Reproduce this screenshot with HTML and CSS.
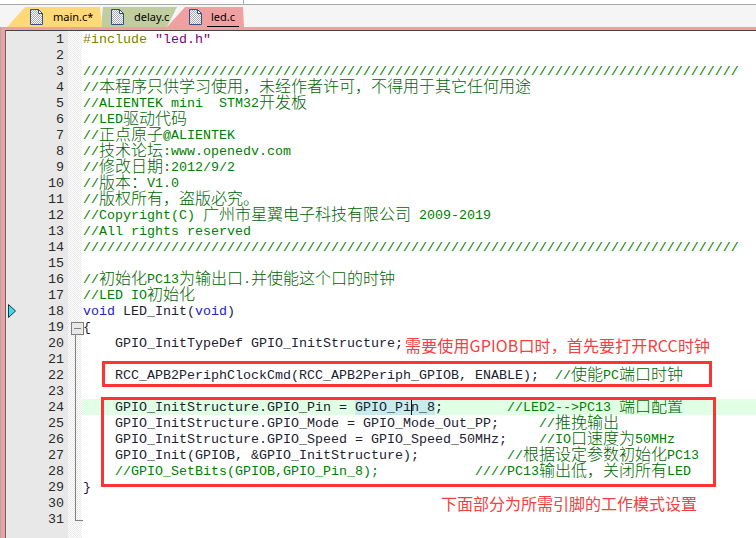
FILE: index.html
```html
<!DOCTYPE html>
<html lang="zh">
<head>
<meta charset="utf-8">
<title>led.c</title>
<link rel="stylesheet" href="styles.css">
</head>
<body>
<div class="app">
  <svg width="0" height="0" class="defs"><defs>
    <pattern id="dots" width="2" height="2" patternUnits="userSpaceOnUse"><rect width="2" height="2" fill="#fff"/><rect width="1" height="1" fill="#aab"/><rect x="1" y="1" width="1" height="1" fill="#aab"/></pattern>
    <symbol id="page" viewBox="0 0 13 16"><path d="M.5.5H8.5L12.5 4.5V15.5H.5Z" fill="url(#dots)" stroke="#33508c"/><path d="M8.5.5V4.5H12.5Z" fill="#fff" stroke="#33508c"/></symbol>
  </defs></svg>
  <div class="topbar"></div>
  <div class="tabs">
    <div class="tab tab-main"><svg class="page"><use href="#page"/></svg><span class="tab-label">main.c*</span></div>
    <div class="tab tab-delay"><svg class="page"><use href="#page"/></svg><span class="tab-label">delay.c</span></div>
    <div class="tab tab-led"><svg class="page"><use href="#page"/></svg><span class="tab-label active">led.c</span></div>
  </div>
  <div class="frame">
    <div class="editor">
      <div class="row"><span class="num">1</span><span class="fold"></span><code class="code"><span class="p">#include</span> <span class="s">"led.h"</span></code></div>
      <div class="row"><span class="num">2</span><span class="fold"></span><code class="code"></code></div>
      <div class="row"><span class="num">3</span><span class="fold"></span><code class="code c">//////////////////////////////////////////////////////////////////////////////////</code></div>
      <div class="row"><span class="num">4</span><span class="fold"></span><code class="code c">//<span class="z">本程序只供学习使用，未经作者许可，不得用于其它任何用途</span></code></div>
      <div class="row"><span class="num">5</span><span class="fold"></span><code class="code c">//ALIENTEK mini  STM32<span class="z">开发板</span></code></div>
      <div class="row"><span class="num">6</span><span class="fold"></span><code class="code c">//LED<span class="z">驱动代码</span></code></div>
      <div class="row"><span class="num">7</span><span class="fold"></span><code class="code c">//<span class="z">正点原子</span>@ALIENTEK</code></div>
      <div class="row"><span class="num">8</span><span class="fold"></span><code class="code c">//<span class="z">技术论坛</span>:www.openedv.com</code></div>
      <div class="row"><span class="num">9</span><span class="fold"></span><code class="code c">//<span class="z">修改日期</span>:2012/9/2</code></div>
      <div class="row"><span class="num">10</span><span class="fold"></span><code class="code c">//<span class="z">版本：</span>V1.0</code></div>
      <div class="row"><span class="num">11</span><span class="fold"></span><code class="code c">//<span class="z">版权所有，盗版必究。</span></code></div>
      <div class="row"><span class="num">12</span><span class="fold"></span><code class="code c">//Copyright(C) <span class="z">广州市星翼电子科技有限公司</span> 2009-2019</code></div>
      <div class="row"><span class="num">13</span><span class="fold"></span><code class="code c">//All rights reserved</code></div>
      <div class="row"><span class="num">14</span><span class="fold"></span><code class="code c">//////////////////////////////////////////////////////////////////////////////////</code></div>
      <div class="row"><span class="num">15</span><span class="fold"></span><code class="code"></code></div>
      <div class="row"><span class="num">16</span><span class="fold"></span><code class="code c">//<span class="z">初始化</span>PC13<span class="z">为输出口</span>.<span class="z">并使能这个口的时钟</span></code></div>
      <div class="row"><span class="num">17</span><span class="fold"></span><code class="code c">//LED IO<span class="z">初始化</span></code></div>
      <div class="row"><span class="num">18</span><span class="fold"></span><code class="code"><span class="k">void</span> LED_Init(<span class="k">void</span>)</code></div>
      <div class="row"><span class="num">19</span><span class="fold fold-box"></span><code class="code">{</code></div>
      <div class="row"><span class="num">20</span><span class="fold fold-line"></span><code class="code">    GPIO_InitTypeDef GPIO_InitStructure;</code></div>
      <div class="row"><span class="num">21</span><span class="fold fold-line"></span><code class="code"></code></div>
      <div class="row"><span class="num">22</span><span class="fold fold-line"></span><code class="code">    RCC_APB2PeriphClockCmd(RCC_APB2Periph_GPIOB, ENABLE);  <span class="c">//<span class="z">使能</span>PC<span class="z">端口时钟</span></span></code></div>
      <div class="row"><span class="num">23</span><span class="fold fold-line"></span><code class="code"></code></div>
      <div class="row"><span class="num">24</span><span class="fold fold-line"></span><code class="code current">    GPIO_InitStructure.GPIO_Pin = <span class="match">GPIO_Pin<span class="caret"></span>_8</span>;        <span class="c">//LED2--&gt;PC13 <span class="z">端口配置</span></span></code></div>
      <div class="row"><span class="num">25</span><span class="fold fold-line"></span><code class="code">    GPIO_InitStructure.GPIO_Mode = GPIO_Mode_Out_PP;     <span class="c">//<span class="z">推挽输出</span></span></code></div>
      <div class="row"><span class="num">26</span><span class="fold fold-line"></span><code class="code">    GPIO_InitStructure.GPIO_Speed = GPIO_Speed_50MHz;    <span class="c">//IO<span class="z">口速度为</span>50MHz</span></code></div>
      <div class="row"><span class="num">27</span><span class="fold fold-line"></span><code class="code">    GPIO_Init(GPIOB, &amp;GPIO_InitStructure);           <span class="c">//<span class="z">根据设定参数初始化</span>PC13</span></code></div>
      <div class="row"><span class="num">28</span><span class="fold fold-line"></span><code class="code">    <span class="c">//GPIO_SetBits(GPIOB,GPIO_Pin_8);            ////PC13<span class="z">输出低，关闭所有</span>LED</span></code></div>
      <div class="row"><span class="num">29</span><span class="fold fold-line"></span><code class="code">}</code></div>
      <div class="row"><span class="num">30</span><span class="fold fold-line"></span><code class="code"></code></div>
      <div class="row"><span class="num">31</span><span class="fold fold-end"></span><code class="code"></code></div>
      <div class="row filler"><span class="num"></span><span class="fold"></span><code class="code"></code></div>
    </div>
  </div>
  <svg class="marker" width="8" height="14" viewBox="0 0 8 14"><path d="M.5.5L7.5 7L.5 13.5Z" fill="#33e0f0" stroke="#234"/></svg>
  <div class="callout callout-a">需要使用GPIOB口时，首先要打开RCC时钟</div>
  <div class="redbox redbox-a"></div>
  <div class="redbox redbox-b"></div>
  <div class="callout callout-b">下面部分为所需引脚的工作模式设置</div>
</div>
</body>
</html>
```
FILE: styles.css
```css
* { box-sizing: border-box; }
html, body { margin: 0; padding: 0; background: #fff; }
.app { position: relative; width: 756px; height: 538px; overflow: hidden; display: flex; flex-direction: column; background: #fff; }
.defs { position: absolute; }
.topbar { position: relative; height: 5px; flex: none; border-bottom: 1px solid #aaa; }
.topbar::after { content: ""; position: absolute; left: 243px; top: 0; bottom: 0; width: 1px; background: #aaa; }
.tabs { height: 22px; flex: none; display: flex; align-items: stretch; background: #f5f5f5; padding-left: 7px; }
.tab { display: flex; align-items: center; height: 20px; margin-top: 2px; font: 11px/20px "Noto Sans", sans-serif; color: #000; }
.tab-main { width: 95px; padding-left: 23px; background: #ffd877; clip-path: polygon(0 100%, 18px 0, 93px 0, 95px 100%); position: relative; z-index: 1; }
.tab-delay { width: 78px; margin-left: -1px; padding-left: 10px; background: #c0cd9f; clip-path: polygon(0 100%, 2px 0, 76px 0, 66px 100%); }
.tab-led { width: 77px; margin-left: -12px; padding-left: 22px; background: #f0a0a0; clip-path: polygon(0 100%, 18px 0, 76px 0, 77px 100%); }
.page { width: 13px; height: 16px; flex: none; }
.tab-label { margin-left: 10px; }
.tab-led .tab-label { margin-left: 9px; }
.active { position: relative; }
.active::after { content: ""; position: absolute; left: -4px; right: -4px; bottom: -1px; height: 2px; background: #000; }
.frame { flex: 1; min-height: 0; display: flex; flex-direction: column; padding: 3px 0 0 5px; background: #f0a0a0; border-left: 1px solid #aaa; }
.editor { flex: 1; min-height: 0; display: flex; flex-direction: column; background: #fff; border-top: 1px solid #444; border-left: 1px solid #666; margin-left: -1px; }
.row { display: flex; height: 16px; flex: none; font: 13.33px/18px "Liberation Mono", monospace; color: #1c2230; }
.filler { flex: 1; height: auto; }
.num { width: 62px; flex: none; padding-right: 4px; text-align: right; background: #e8e8e8; color: #2a2a2a; }
.fold { position: relative; width: 14px; flex: none; background: repeating-conic-gradient(#e8e8e8 0 25%, #fff 0 50%) 0 0 / 2px 2px; }
.fold-line::before, .fold-box::after { content: ""; position: absolute; left: 7px; top: 0; bottom: 0; width: 1px; background: #808080; }
.fold-box::before { content: ""; position: absolute; left: 3px; top: 3px; width: 11px; height: 11px; border: 1px solid #808080; background: linear-gradient(#808080, #808080) center / 7px 1px no-repeat #e8e8e8; z-index: 1; }
.fold-box::after { top: 13px; }
.fold-end::before { content: ""; position: absolute; left: 7px; top: 0; width: 7px; height: 9px; border-left: 1px solid #808080; border-bottom: 1px solid #808080; }
.code { flex: 1; min-width: 0; padding-left: 1px; font: inherit; white-space: pre; }
.z { font-family: "Noto Sans CJK SC", sans-serif; font-size: 16px; line-height: 0; font-weight: 300; vertical-align: -1px; color: #006400; }
.c { color: #008000; }
.k { color: #2222c8; }
.p { color: #808000; }
.s { color: #800080; }
.current { background: #e0ffe4; }
.match { position: relative; display: inline-block; background: linear-gradient(#c8ecec, #c8ecec) 0 0 / 100% 16px no-repeat; }
.caret { position: absolute; top: 0; left: 56px; width: 1px; height: 16px; background: #000; }
.marker { position: absolute; left: 8px; top: 304px; }
.callout { position: absolute; font: 16px/22px "Noto Sans CJK SC", sans-serif; color: #f44040; white-space: nowrap; letter-spacing: .13px; }
.callout-a { left: 405px; top: 334px; }
.callout-b { left: 441px; top: 492px; letter-spacing: 0; }
.redbox { position: absolute; border: 3px solid #ff3333; }
.redbox-a { left: 102px; top: 361px; width: 610px; height: 26px; }
.redbox-b { left: 101px; top: 397px; width: 615px; height: 90px; }
```
